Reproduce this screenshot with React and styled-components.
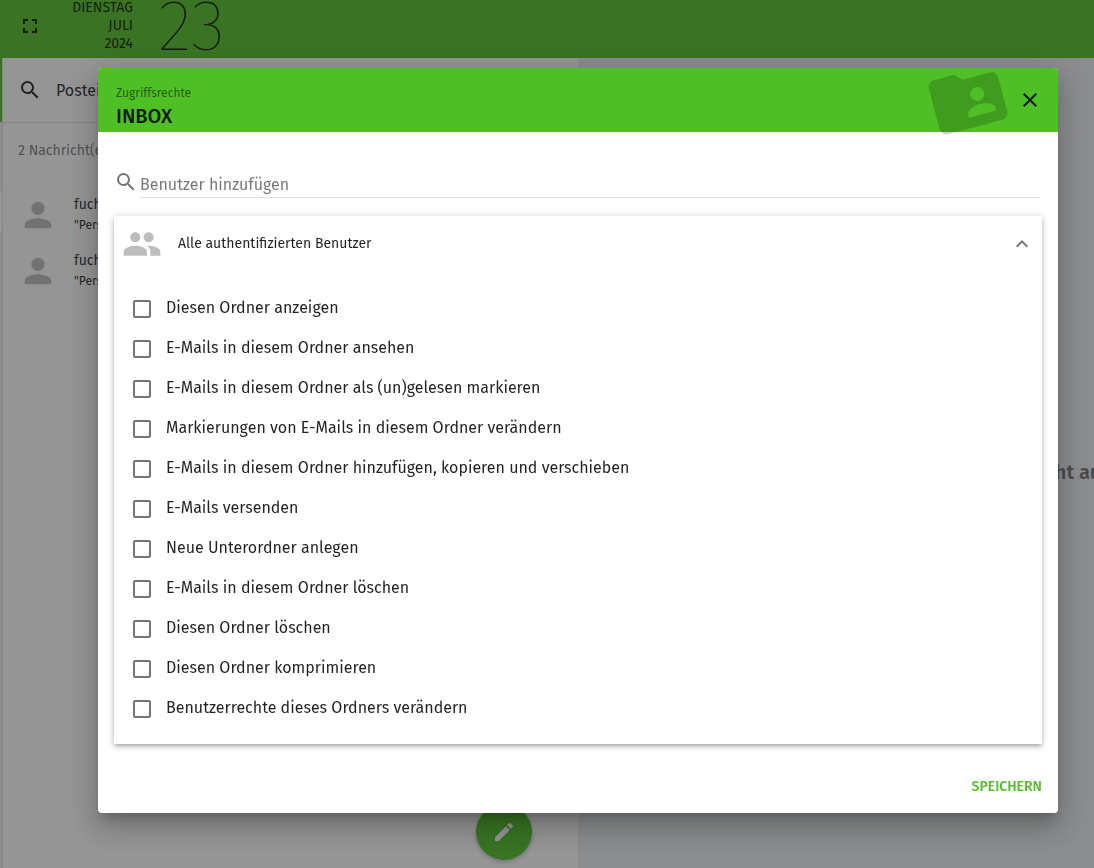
import React, { useState } from 'react';
import styled, { createGlobalStyle } from 'styled-components';
import {
  MdClose,
  MdEdit,
  MdExpandLess,
  MdFolderShared,
  MdFullscreen,
  MdPeople,
  MdPerson,
  MdSearch,
} from 'react-icons/md';

const GlobalStyle = createGlobalStyle`
  *, *::before, *::after {
    box-sizing: border-box;
  }

  body {
    margin: 0;
    overflow: hidden;
    font-family: 'Fira Sans', 'Noto Sans', sans-serif;
    font-size: 16px;
    color: rgba(0, 0, 0, 0.87);
  }

  button, input {
    font-family: inherit;
    color: inherit;
  }

  svg {
    display: block;
    flex: none;
  }
`;

const Page = styled.div`
  display: flex;
  flex-direction: column;
  height: 100vh;
  overflow: hidden;
`;

const TopBar = styled.header`
  display: flex;
  align-items: flex-end;
  height: 58px;
  flex: none;
  background: #4fbf26;
`;

const IconButton = styled.button`
  display: flex;
  align-items: center;
  justify-content: center;
  padding: 0;
  border: 0;
  background: none;
  cursor: pointer;
`;

const FullscreenButton = styled(IconButton)`
  width: 60px;
  height: 64px;
`;

const DateText = styled.div`
  width: 73px;
  padding-bottom: 5px;
  font-size: 14px;
  line-height: 18px;
  text-align: right;
  text-transform: uppercase;
`;

const DayNumber = styled.div`
  padding: 0 0 5px 25px;
  font-size: 72px;
  font-weight: 100;
  line-height: 54px;
`;

const Columns = styled.div`
  display: flex;
  flex: 1;
  min-height: 0;
`;

const SidebarEdge = styled.aside`
  width: 2px;
  background: #ededed;

  &::before {
    content: '';
    display: block;
    height: 64px;
    background: #4fbf26;
  }

  &::after {
    content: '';
    display: block;
    height: 40px;
    margin-top: 69px;
    background: #fff;
  }
`;

const MessageColumn = styled.section`
  position: relative;
  width: 576px;
  background: #fff;
  border-left: 1px solid rgba(0, 0, 0, 0.12);
`;

const ListToolbar = styled.div`
  display: flex;
  align-items: center;
  gap: 14px;
  height: 65px;
  padding-left: 15px;
  border-bottom: 1px solid rgba(0, 0, 0, 0.12);
`;

const Counter = styled.div`
  padding: 18px 15px 26px;
  font-size: 14px;
  line-height: 20px;
  color: rgba(0, 0, 0, 0.54);
`;

const Message = styled.div`
  display: flex;
  align-items: center;
  gap: 16px;
  height: 56px;
  padding-left: 15px;

  svg {
    color: rgba(0, 0, 0, 0.26);
  }
`;

const Sender = styled.div`
  font-size: 14px;
  line-height: 20px;
`;

const Subject = styled.div`
  font-size: 12px;
  line-height: 20px;
`;

const ComposeButton = styled(IconButton)`
  position: absolute;
  right: 46px;
  bottom: 8px;
  width: 56px;
  height: 56px;
  border-radius: 50%;
  background: #4fbf26;
  color: #fff;
  box-shadow: 0 2px 5px rgba(0, 0, 0, 0.26);
`;

const DetailPane = styled.main`
  display: flex;
  align-items: center;
  flex: 1;
  min-width: 0;
  background: #eceff1;
`;

const EmptyHint = styled.p`
  margin: 18px 0 0 352px;
  font-size: 20px;
  font-weight: 600;
  white-space: nowrap;
  color: rgba(0, 0, 0, 0.54);
`;

const Backdrop = styled.div`
  position: fixed;
  inset: 0;
  padding: 68px 36px 48px 98px;
  background: rgba(33, 33, 33, 0.48);
`;

const Dialog = styled.form`
  border-radius: 4px;
  background: #fff;
  box-shadow:
    0 8px 10px -5px rgba(0, 0, 0, 0.2),
    0 16px 24px 2px rgba(0, 0, 0, 0.14),
    0 6px 30px 5px rgba(0, 0, 0, 0.12);
`;

const DialogHeader = styled.header`
  display: flex;
  align-items: center;
  gap: 8px;
  height: 64px;
  padding: 0 16px 0 18px;
  border-radius: 4px 4px 0 0;
  background: #4fbf26;
`;

const Titles = styled.div`
  flex: 1;
  padding-top: 12px;
`;

const Overline = styled.div`
  font-size: 12px;
  line-height: 20px;
  color: rgba(0, 0, 0, 0.54);
`;

const Title = styled.h2`
  margin: 0;
  font-size: 20px;
  font-weight: 500;
  line-height: 26px;
`;

const HeaderIcon = styled(MdFolderShared)`
  margin: -10px 0;
  color: rgba(0, 0, 0, 0.18);
  transform: rotate(-15deg);
`;

const DialogBody = styled.div`
  padding: 38px 16px 16px;
`;

const SearchField = styled.label`
  display: flex;
  gap: 2px;
  margin: 0 2px 18px 0;
  color: rgba(0, 0, 0, 0.54);
`;

const SearchInput = styled.input`
  flex: 1;
  height: 28px;
  padding: 2px 0 0;
  border: 0;
  border-bottom: 1px solid rgba(0, 0, 0, 0.12);
  outline: 0;
  background: none;
  font-size: 16px;

  &::placeholder {
    color: rgba(0, 0, 0, 0.54);
    opacity: 1;
  }
`;

const Panel = styled.section`
  background: #fff;
  box-shadow:
    0 1px 8px rgba(0, 0, 0, 0.2),
    0 3px 4px rgba(0, 0, 0, 0.14),
    0 3px 3px -2px rgba(0, 0, 0, 0.12);
`;

const PanelHeader = styled.button`
  display: flex;
  align-items: center;
  gap: 16px;
  width: 100%;
  height: 56px;
  padding: 0 8px;
  border: 0;
  background: none;
  font-size: 14px;
  text-align: left;
  cursor: pointer;

  span {
    flex: 1;
    padding-bottom: 2px;
  }

  svg:first-child {
    color: rgba(0, 0, 0, 0.26);
  }

  svg:last-child {
    color: rgba(0, 0, 0, 0.54);
  }
`;

const Rights = styled.div`
  padding: 16px 19px;
`;

const Right = styled.label`
  display: flex;
  align-items: center;
  gap: 15px;
  height: 40px;
  padding-bottom: 2px;
`;

const Checkbox = styled.input`
  appearance: none;
  width: 18px;
  height: 18px;
  margin: 4px 0 0;
  border: 2px solid rgba(0, 0, 0, 0.54);
  border-radius: 2px;

  &:checked {
    border-color: #4fbf26;
    background: #4fbf26;
  }
`;

const DialogActions = styled.footer`
  display: flex;
  justify-content: flex-end;
  padding: 8px 16px;
`;

const SaveButton = styled.button`
  height: 37px;
  padding: 0;
  border: 0;
  background: none;
  font-size: 14px;
  font-weight: 500;
  text-transform: uppercase;
  color: #4fbf26;
  cursor: pointer;
`;

const rights = [
  'Diesen Ordner anzeigen',
  'E-Mails in diesem Ordner ansehen',
  'E-Mails in diesem Ordner als (un)gelesen markieren',
  'Markierungen von E-Mails in diesem Ordner verändern',
  'E-Mails in diesem Ordner hinzufügen, kopieren und verschieben',
  'E-Mails versenden',
  'Neue Unterordner anlegen',
  'E-Mails in diesem Ordner löschen',
  'Diesen Ordner löschen',
  'Diesen Ordner komprimieren',
  'Benutzerrechte dieses Ordners verändern',
];

const messages = [1, 2];

const Mailbox = () => (
  <Page>
    <TopBar>
      <FullscreenButton type="button" aria-label="Vollbild">
        <MdFullscreen size={24} />
      </FullscreenButton>
      <DateText>
        <div>Dienstag</div>
        <div>Juli</div>
        <div>2024</div>
      </DateText>
      <DayNumber>23</DayNumber>
    </TopBar>
    <Columns>
      <SidebarEdge />
      <MessageColumn>
        <ListToolbar>
          <MdSearch size={24} />
          <span>Posteingang</span>
        </ListToolbar>
        <Counter>2 Nachricht(en)</Counter>
        {messages.map((id) => (
          <Message key={id}>
            <MdPerson size={40} />
            <div>
              <Sender>fuchs</Sender>
              <Subject>"Person"</Subject>
            </div>
          </Message>
        ))}
        <ComposeButton type="button" aria-label="Neue Nachricht">
          <MdEdit size={24} />
        </ComposeButton>
      </MessageColumn>
      <DetailPane>
        <EmptyHint>Keine Nachricht ausgewählt</EmptyHint>
      </DetailPane>
    </Columns>
  </Page>
);

const AccessRightsDialog = () => {
  const [open, setOpen] = useState(true);

  return (
    <Backdrop>
      <Dialog role="dialog" aria-labelledby="dialog-title" onSubmit={(e) => e.preventDefault()}>
        <DialogHeader>
          <Titles>
            <Overline>Zugriffsrechte</Overline>
            <Title id="dialog-title">INBOX</Title>
          </Titles>
          <HeaderIcon size={84} />
          <IconButton type="button" aria-label="Schließen">
            <MdClose size={24} />
          </IconButton>
        </DialogHeader>
        <DialogBody>
          <SearchField>
            <MdSearch size={24} />
            <SearchInput type="text" placeholder="Benutzer hinzufügen" aria-label="Benutzer hinzufügen" />
          </SearchField>
          <Panel>
            <PanelHeader type="button" aria-expanded={open} onClick={() => setOpen(!open)}>
              <MdPeople size={40} />
              <span>Alle authentifizierten Benutzer</span>
              <MdExpandLess size={24} />
            </PanelHeader>
            {open && (
              <Rights>
                {rights.map((label) => (
                  <Right key={label}>
                    <Checkbox type="checkbox" />
                    <span>{label}</span>
                  </Right>
                ))}
              </Rights>
            )}
          </Panel>
        </DialogBody>
        <DialogActions>
          <SaveButton type="submit">Speichern</SaveButton>
        </DialogActions>
      </Dialog>
    </Backdrop>
  );
};

const App = () => (
  <>
    <GlobalStyle />
    <Mailbox />
    <AccessRightsDialog />
  </>
);

export default App;
